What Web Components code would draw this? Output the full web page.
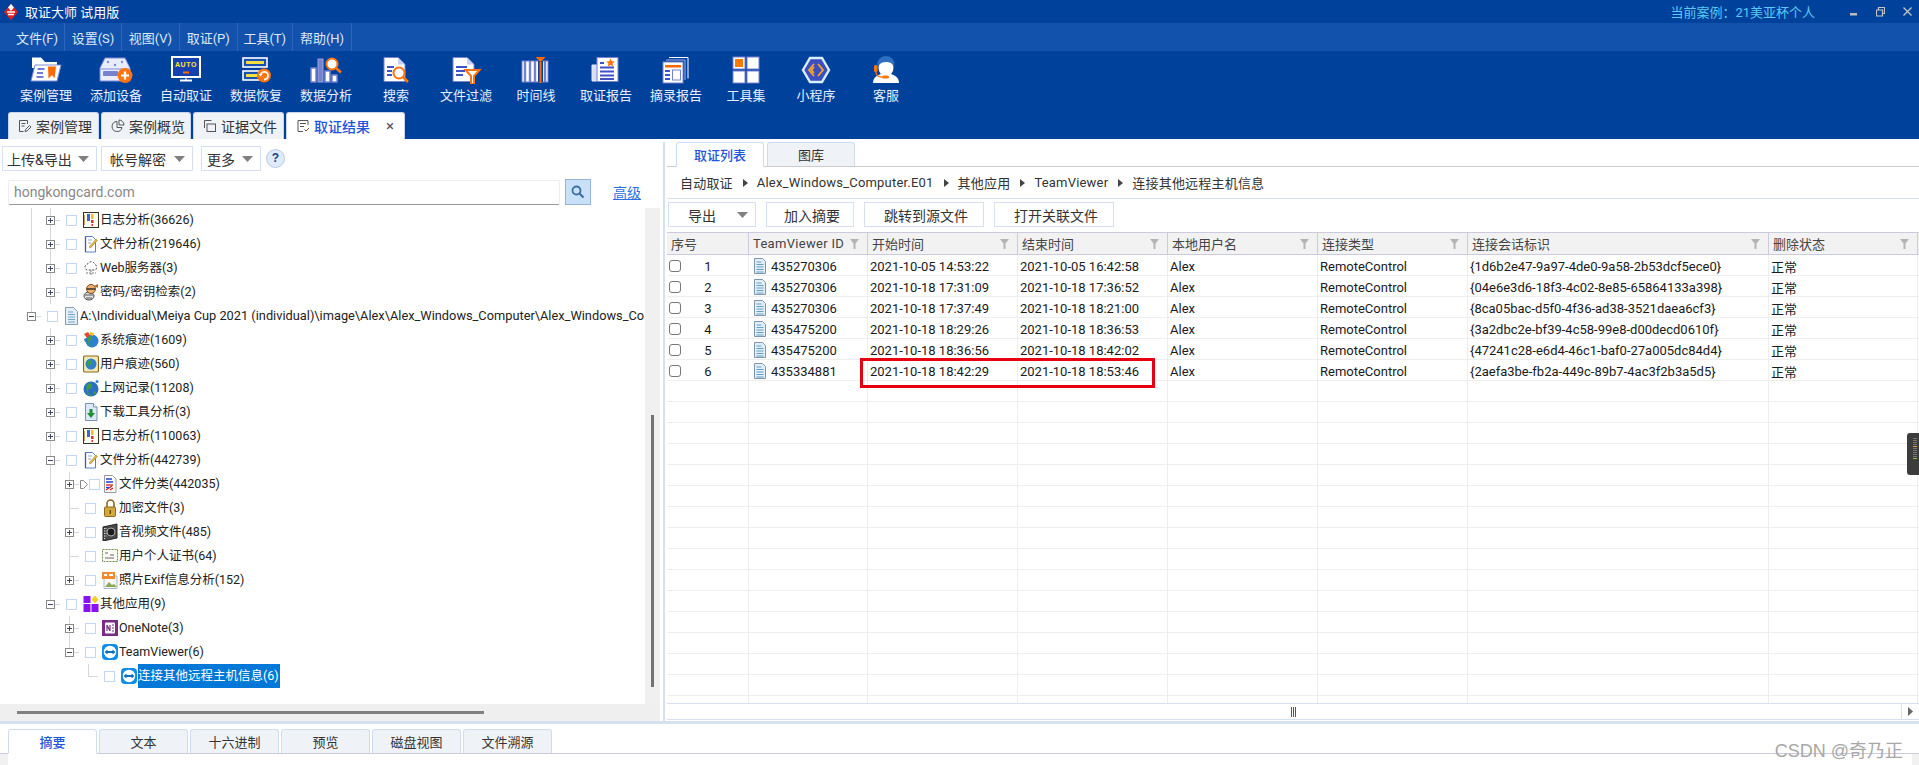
<!DOCTYPE html>
<html lang="zh">
<head>
<meta charset="utf-8">
<title>取证大师</title>
<style>
  html, body { margin: 0; height: 765px; overflow: hidden; background: #fff; }
  body { font: 13px Roboto, "Noto Sans CJK SC", sans-serif; color: #222; }
</style>
</head>
<body>

<script>
// small icons used by the tree and the tables
const PAGE = (fill, extra) => `<svg width="16" height="18" viewBox="0 0 16 18"><path d="M2.5 .5h8l3.5 3.5v13.500h-11.500z" fill="${fill}" stroke="#7d93ad"/><path d="M10.500 .5v3.500h3.500" fill="#fff" stroke="#7d93ad"/>${extra}</svg>`;
const TV = `<svg width="16" height="18" viewBox="0 0 16 18"><rect y="1" width="16" height="16" rx="4" fill="#0e8ee9"/><circle cx="8" cy="9" r="6.200" fill="#fff"/><path d="M2.500 9l3-2.500v1.500h5v-1.500l3 2.500-3 2.500v-1.500h-5v1.500z" fill="#0e6fc0"/></svg>`;
const LOG = `<svg width="16" height="18" viewBox="0 0 16 18"><rect x=".5" y="1.500" width="15" height="15" fill="#fdfdf4" stroke="#3a3320"/><rect x="4" y="3" width="3" height="7" fill="#3d63d6"/><rect x="8" y="3" width="2.500" height="5" fill="#f0c020"/><rect x="8" y="9" width="2.500" height="3" fill="#d83030"/><rect x="8.500" y="13" width="1.500" height="2" fill="#d83030"/><path d="M1.500 4v10" stroke="#c8a860"/></svg>`;
const FILEANA = `<svg width="16" height="18" viewBox="0 0 16 18"><path d="M2.500 1.500h7l3 3v12.500h-10z" fill="#fff" stroke="#5a80b8"/><path d="M5 5h4M5 8h3" stroke="#9ab"/><path d="M6 12l7-8 1.500 1.500-7 7.500z" fill="#e6b93a" stroke="#8a7030" stroke-width=".5"/><path d="M2.500 1.500v15.500" stroke="#2d62b8" stroke-width="1.300"/></svg>`;
const TREE_ICONS = {
  log: LOG,
  fileana: FILEANA,
  web: `<svg width="16" height="18" viewBox="0 0 16 18"><path d="M4 11a3 3 0 0 1 .5-5.800a4 4 0 0 1 7.500 .3a3 3 0 0 1 0 5.500z" fill="#fff" stroke="#444" stroke-dasharray="2 1.500"/><path d="M8 11v5M3 14h10" stroke="#777" stroke-dasharray="2 1"/></svg>`,
  key: `<svg width="16" height="18" viewBox="0 0 16 18"><ellipse cx="6" cy="13" rx="5" ry="4" fill="#e8e8e8" stroke="#444"/><circle cx="8" cy="6" r="4.500" fill="#f2b070" stroke="#7a4a20"/><path d="M4 6h8" stroke="#333" stroke-width="1.500"/><path d="M11 3l4-2v4z" fill="#c06020"/><path d="M2 12h8M3 15h6" stroke="#555"/></svg>`,
  doc: `<svg width="14" height="18" viewBox="0 0 14 18"><path d="M1.500 .5h8l4 4v13h-12z" fill="#e3eef8" stroke="#8a9bb0"/><path d="M4 5h5M4 7.500h7M4 10h7M4 12.500h7M4 15h7" stroke="#6fa8c8"/></svg>`,
  sys: `<svg width="16" height="18" viewBox="0 0 16 18"><circle cx="9" cy="10" r="6.500" fill="#2f7fd0"/><path d="M5 6c3-2 5 0 4 2s-3 1-3 3 2 3 3 4c-3 0-5-3-4-9z" fill="#3aa040"/><path d="M1 3l4-2 2 3-3 3z" fill="#e04a30"/><path d="M7 1l4 1-1 3-3-1z" fill="#f0c020"/><path d="M1 8l3-1 1 3-3 1z" fill="#3a70d0"/></svg>`,
  user: `<svg width="16" height="18" viewBox="0 0 16 18"><rect x=".5" y="1" width="15" height="16" rx="1.500" fill="#f3e8b8" stroke="#8a6a18" stroke-width="1.200"/><circle cx="8" cy="9" r="5.500" fill="#2f7fd0"/><path d="M5 6c3-2 5 0 4 2s-3 1-2 4c-3-1-3-4-2-6z" fill="#3aa040"/></svg>`,
  ie: `<svg width="16" height="18" viewBox="0 0 16 18"><circle cx="8" cy="10" r="7.500" fill="#2a70c0"/><path d="M4 5c4-2 6 0 5 3s-4 1-4 4 3 3 4 5c-4 0-7-6-5-12z" fill="#3f9a48"/><path d="M10 13c2-1 3 0 3 1l-2 2z" fill="#3f9a48"/><circle cx="14" cy="2.500" r="1.500" fill="#3a80e0"/></svg>`,
  down: PAGE('#dbe8f8', '<path d="M6.500 6h3v4h2.500l-4 5-4-5h2.500z" fill="#1f8f2f"/>'),
  cls: `<svg width="16" height="18" viewBox="0 0 16 18"><path d="M2.500 .5h8l3.500 3.500v13.500h-11.500z" fill="#fff" stroke="#999"/><path d="M4 4h6M4 7h7" stroke="#2040d0" stroke-width="1.300"/><path d="M4 10h7" stroke="#d02020" stroke-width="1.300"/><path d="M4 15l6-4M8 15l3-2" stroke="#d02020" stroke-width="1.300"/><path d="M4 12.500h3" stroke="#2040d0" stroke-width="1.300"/></svg>`,
  lock: `<svg width="16" height="18" viewBox="0 0 16 18"><path d="M5 8V4.500a3.500 3.500 0 0 1 7 0V8" fill="none" stroke="#8a6a20" stroke-width="1.600"/><rect x="2.500" y="8" width="11" height="9.500" rx="1" fill="#d4a840" stroke="#8a6a20"/><rect x="7.500" y="11" width="1.500" height="4" fill="#6a5010"/></svg>`,
  av: `<svg width="16" height="18" viewBox="0 0 16 18"><path d="M1 4l14-3v14l-14 3z" fill="#4a4a4a" stroke="#222"/><circle cx="9" cy="9" r="4" fill="#1c1c1c" stroke="#aaa"/><path d="M2.500 5v11M4 5v10" stroke="#ddd" stroke-dasharray="1 1.500"/></svg>`,
  cert: `<svg width="16" height="18" viewBox="0 0 16 18"><rect x=".5" y="2.500" width="15" height="12" fill="#fbfbf4" stroke="#6f8f50" stroke-dasharray="2 1"/><path d="M3 6h3M8 8h4M3 11h9" stroke="#667"/></svg>`,
  exif: `<svg width="16" height="18" viewBox="0 0 16 18"><path d="M2 5h13v12.500h-13z" fill="#f6f6f6" stroke="#a8b8c8"/><rect y="1" width="13" height="7" fill="#f08c30"/><rect x="2" y="3" width="3" height="2" fill="#fff"/><rect x="7" y="3" width="4" height="2" fill="#fff"/><path d="M3 16l4-5 3 3 2-1 3 3z" fill="#8aa850"/></svg>`,
  apps: `<svg width="16" height="18" viewBox="0 0 16 18"><rect x=".5" y="1" width="7" height="7" fill="#8a10f0"/><rect x=".5" y="9" width="7" height="8" fill="#8a10f0"/><rect x="8.500" y="9" width="7" height="8" fill="#8a10f0"/><path d="M12 .5l3.500 4-3.500 4-3.500-4z" fill="#f5d020"/></svg>`,
  one: `<svg width="16" height="18" viewBox="0 0 16 18"><rect y="1" width="16" height="16" fill="#7b2a8a"/><rect x="3" y="3.500" width="10" height="11" rx="1" fill="#fff"/><path d="M5 12V6l3 6V6" fill="none" stroke="#7b2a8a" stroke-width="1.200"/><path d="M10 6h2M10 9h2M10 12h2" stroke="#7b2a8a"/></svg>`,
  tv: TV
};
const FUNNEL = `<svg width="9" height="10" viewBox="0 0 9 10"><path d="M0 0h9L5.500 4.500V10h-2V4.500z" fill="#b4b4b4"/></svg>`;
const ARROW = `<svg width="11" height="6" viewBox="0 0 11 6"><path d="M0 0h11L5.500 6z" fill="#808080"/></svg>`;

customElements.define('title-bar', class extends HTMLElement {
  connectedCallback() {
    this.attachShadow({ mode: 'open' }).innerHTML = `
      <style>
        :host { display: flex; align-items: center; height: 23px; background: #00419c; color: #fff; padding-left: 4px; }
        .name { margin-left: 7px; }
        .case { margin-left: auto; color: #5cc9f2; margin-right: 35px; }
        svg { display: block; }
        .win { padding-right: 7px; display: flex; align-items: center; gap: 18px; }
      </style>
      <svg width="14" height="16" viewBox="0 0 14 16"><path d="M7 0l7 8-7 8-7-8z" fill="#e02020"/><path d="M7 0l3 3.500-3 3.500-3-3.500z" fill="#fff"/><path d="M3 8h8M4 10.500h6" stroke="#fff" stroke-width="1.300"/></svg>
      <span class="name">取证大师 试用版</span>
      <span class="case">当前案例：21美亚杯个人</span>
      <div class="win">
        <svg width="8" height="8" viewBox="0 0 8 8"><rect x="0" y="5" width="7" height="2.500" fill="#bcbcbc"/></svg>
        <svg width="9" height="10" viewBox="0 0 9 10"><path d="M2.500 2.500v-2h6v6h-2M.5 3h6v6h-6z" fill="none" stroke="#c4c4c4" stroke-width="1.200"/></svg>
        <svg width="9" height="9" viewBox="0 0 9 9"><path d="M.5 .5l8 8M8.500 .5l-8 8" stroke="#c4c4c4" stroke-width="1.300"/></svg>
      </div>`;
  }
});

customElements.define('menu-bar', class extends HTMLElement {
  connectedCallback() {
    this.attachShadow({ mode: 'open' }).innerHTML = `
      <style>
        :host { display: flex; height: 28px; background: #1252ac; color: #dce9fb; padding-left: 10px; }
        ::slotted(span) { display: flex; align-items: center; justify-content: center; box-sizing: border-box; border-right: 1px solid #2c66b8; }
      </style>
      <slot></slot>`;
  }
});

customElements.define('tool-bar', class extends HTMLElement {
  connectedCallback() {
    this.attachShadow({ mode: 'open' }).innerHTML = `
      <style>:host { display: flex; height: 61px; background: #00419c; padding-left: 11px; }</style>
      <slot></slot>`;
  }
});

customElements.define('tool-item', class extends HTMLElement {
  connectedCallback() {
    this.attachShadow({ mode: 'open' }).innerHTML = `
      <style>
        :host { display: flex; flex-direction: column; align-items: center; width: 70px; padding-top: 5px; color: #e6f0ff; box-sizing: border-box; }
        .ico { height: 28px; }
        ::slotted(svg) { display: block; }
        .lab { margin-top: 2px; line-height: 20px; }
      </style>
      <div class="ico"><slot></slot></div>
      <div class="lab">${this.getAttribute('label')}</div>`;
  }
});

customElements.define('main-tabs', class extends HTMLElement {
  connectedCallback() {
    this.attachShadow({ mode: 'open' }).innerHTML = `
      <style>:host { display: flex; height: 27px; background: #00419c; padding-left: 8px; gap: 2px; align-items: flex-end; }</style>
      <slot></slot>`;
  }
});

customElements.define('main-tab', class extends HTMLElement {
  connectedCallback() {
    const on = this.hasAttribute('active');
    this.attachShadow({ mode: 'open' }).innerHTML = `
      <style>
        :host { display: flex; align-items: center; box-sizing: border-box; height: 27px; border-radius: 3px 3px 0 0;
          background: ${on ? '#fff' : '#eff3f8'}; border: 1px solid #c6d6ee; border-bottom: 0; font-size: 14px;
          color: ${on ? '#2255dd' : '#333'}; padding-left: 9px; width: ${this.getAttribute('w')}px; font-weight: ${on ? 500 : 400}; }
        ::slotted(svg) { margin-right: 4px; flex: none; }
        .x { margin-left: 16px; color: #555; font-size: 15px; font-weight: 400; }
      </style>
      <slot name="icon"></slot><slot></slot>${on ? '<span class="x">×</span>' : ''}`;
  }
});

customElements.define('drop-button', class extends HTMLElement {
  connectedCallback() {
    const noArrow = this.hasAttribute('plain');
    this.attachShadow({ mode: 'open' }).innerHTML = `
      <style>
        :host { display: flex; align-items: center; box-sizing: border-box; height: 25px; border: 1px solid #d5e0f0; font-size: 14px; color: #333;
          width: ${this.getAttribute('w')}px; padding: 0 ${noArrow ? 0 : 7}px 0 ${this.getAttribute('pl') || 4}px; justify-content: ${noArrow ? 'center' : 'space-between'}; flex: none; }
        svg { display: block; }
      </style>
      <slot></slot>${noArrow ? '' : ARROW}`;
  }
});

customElements.define('search-box', class extends HTMLElement {
  connectedCallback() {
    this.attachShadow({ mode: 'open' }).innerHTML = `
      <style>
        :host { display: flex; align-items: center; height: 26px; margin-top: 8px; padding-left: 8px; }
        .inp { width: 552px; height: 25px; box-sizing: border-box; border: 1px solid #eee; border-bottom: 1px solid #999; color: #888; padding-left: 5px; font-size: 14px; line-height: 23px; border-radius: 2px; }
        .go { width: 26px; height: 26px; box-sizing: border-box; margin-left: 5px; border: 1px solid #94b4d8; background: #c8e0f8; display: flex; align-items: center; justify-content: center; }
        a { margin-left: 22px; color: #2a6ee0; text-decoration: underline; font-size: 14px; }
      </style>
      <div class="inp">hongkongcard.com</div>
      <div class="go"><svg width="14" height="14" viewBox="0 0 14 14"><circle cx="5.500" cy="5.500" r="4" fill="none" stroke="#3a6ea0" stroke-width="1.800"/><path d="M8.500 8.500l4 4" stroke="#3a6ea0" stroke-width="2.200"/></svg></div>
      <a>高级</a>`;
  }
});

customElements.define('tree-row', class extends HTMLElement {
  connectedCallback() {
    const level = +this.getAttribute('level');
    const exp = this.getAttribute('exp');
    const left = 27 + 19 * (level - 1);
    const sel = this.hasAttribute('selected');
    const marker = this.hasAttribute('marker');
    // guide lines are painted as host backgrounds
    const line = (x, y, w, h) => ({ img: 'linear-gradient(#d6d6d6,#d6d6d6)', pos: `${x}px ${y}px`, size: `${w}px ${h}px` });
    const lines = [];
    (this.getAttribute('guides') || '').split(' ').filter(Boolean).forEach(x => lines.push(line(+x, 0, 1, 24)));
    (this.getAttribute('ends') || '').split(' ').filter(Boolean).forEach(x => lines.push(line(+x, 0, 1, 12)));
    lines.push(line(left + 4, 12, 10, 1));
    this.attachShadow({ mode: 'open' }).innerHTML = `
      <style>
        :host { display: flex; align-items: center; height: 24px; flex: none; box-sizing: border-box; padding-left: ${left}px; white-space: nowrap; font-size: 12.500px; color: #222; overflow: hidden;
          background-image: ${lines.map(l => l.img).join(',')}; background-position: ${lines.map(l => l.pos).join(',')}; background-size: ${lines.map(l => l.size).join(',')}; background-repeat: no-repeat; }
        .exp { width: 9px; height: 9px; box-sizing: border-box; flex: none; background: ${exp ? '#fff' : 'none'}; ${exp ? 'border: 1px solid #8a8a8a;' : ''} position: relative; }
        .exp svg { display: block; }
        .tri { margin-left: 6px; flex: none; display: block; }
        .chk { width: 11px; height: 11px; box-sizing: border-box; border: 1px solid #c4d5f6; background: #fff; flex: none; margin-left: ${marker ? 1 : 11}px; }
        .ico { margin-left: ${marker ? 2 : 6}px; width: ${level == 1 ? 15 : 16}px; flex: none; height: 18px; margin-right: 1px; }
        .ico svg { display: block; }
        .t { line-height: 24px; ${sel ? 'background: #0078d7; color: #fff; padding-right: 1px;' : ''} }
      </style>
      <div class="exp">${exp ? `<svg width="7" height="7" viewBox="0 0 7 7"><path d="M1 3.500h5${exp == 'plus' ? 'M3.500 1v5' : ''}" stroke="#3c4a66"/></svg>` : ''}</div>
      ${marker ? '<svg class="tri" width="8" height="9" viewBox="0 0 8 9"><path d="M.5 .5h3l4 4-4 4h-3z" fill="#fff" stroke="#888"/></svg>' : ''}
      <div class="chk"></div>
      <div class="ico">${TREE_ICONS[this.getAttribute('icon')]}</div>
      <span class="t"><slot></slot></span>`;
  }
});

customElements.define('left-panel', class extends HTMLElement {
  connectedCallback() {
    this.attachShadow({ mode: 'open' }).innerHTML = `
      <style>
        :host { display: flex; flex-direction: column; width: 660px; flex: none; margin-right: 3px; }
        .tools { display: flex; align-items: center; gap: 4px; padding: 7px 0 0 2px; }
        .help { width: 19px; height: 19px; box-sizing: border-box; border-radius: 50%; border: 1px solid #b9cbe0; background: #dfeafa; color: #1f3f86; font: bold 12px/17px "Liberation Sans", sans-serif; text-align: center; margin-left: 1px; }
        .body { display: flex; height: 497px; margin-top: 3px; }
        .tree { width: 645px; overflow: hidden; display: flex; flex-direction: column; }
        .vs { width: 15px; background: #f0f0f0; flex: none; box-sizing: border-box; padding: 207px 0 0 6px; }
        .vs div { width: 3px; height: 272px; background: #737373; }
        .hs { height: 17px; background: #efefef; padding: 7px 0 0 17px; box-sizing: border-box; }
        .hs div { width: 467px; height: 3px; background: #808080; }
      </style>
      <div class="tools">
        <drop-button w="95" pl="4">上传&amp;导出</drop-button>
        <drop-button w="92" pl="8">帐号解密</drop-button>
        <drop-button w="60" pl="5" style="margin-left:4px">更多</drop-button>
        <div class="help">?</div>
      </div>
      <search-box></search-box>
      <div class="body">
        <div class="tree"><slot></slot></div>
        <div class="vs"><div></div></div>
      </div>
      <div class="hs"><div></div></div>`;
  }
});

customElements.define('sub-tab', class extends HTMLElement {
  connectedCallback() {
    const on = this.hasAttribute('active');
    this.attachShadow({ mode: 'open' }).innerHTML = `
      <style>
        :host { display: flex; align-items: center; justify-content: center; box-sizing: border-box; border: 1px solid #cfdcf0; border-radius: 3px 3px 0 0;
          border-bottom: ${on ? '1px solid #fff' : '0'}; background: ${on ? '#fff' : '#eff3f8'}; color: ${on ? '#2255dd' : '#333'}; font-weight: ${on ? 500 : 400};
          width: ${this.getAttribute('w') || 89}px; height: ${on ? 25 : 24}px; margin-bottom: ${on ? -1 : 0}px; }
      </style>
      <slot></slot>`;
  }
});

customElements.define('path-bar', class extends HTMLElement {
  connectedCallback() {
    const parts = this.getAttribute('parts').split('|');
    this.attachShadow({ mode: 'open' }).innerHTML = `
      <style>
        :host { display: flex; align-items: center; height: 32px; box-sizing: border-box; border-bottom: 1px solid #d5e0f0; padding-left: 13px; color: #333; gap: 8px; letter-spacing: .2px; }
        svg { display: block; margin-left: 2px; margin-right: 1px; }
      </style>
      ${parts.map(p => `<span>${p}</span>`).join('<svg width="5" height="8" viewBox="0 0 5 8"><path d="M0 0l5 4-5 4z" fill="#444"/></svg>')}`;
  }
});

const COLS = [82, 119, 150, 150, 150, 150, 301, 149];
const HEAD = ['序号', 'TeamViewer ID', '开始时间', '结束时间', '本地用户名', '连接类型', '连接会话标识', '删除状态'];
const ROWS = [
  ['435270306', '2021-10-05 14:53:22', '2021-10-05 16:42:58', '{1d6b2e47-9a97-4de0-9a58-2b53dcf5ece0}'],
  ['435270306', '2021-10-18 17:31:09', '2021-10-18 17:36:52', '{04e6e3d6-18f3-4c02-8e85-65864133a398}'],
  ['435270306', '2021-10-18 17:37:49', '2021-10-18 18:21:00', '{8ca05bac-d5f0-4f36-ad38-3521daea6cf3}'],
  ['435475200', '2021-10-18 18:29:26', '2021-10-18 18:36:53', '{3a2dbc2e-bf39-4c58-99e8-d00decd0610f}'],
  ['435475200', '2021-10-18 18:36:56', '2021-10-18 18:42:02', '{47241c28-e6d4-46c1-baf0-27a005dc84d4}'],
  ['435334881', '2021-10-18 18:42:29', '2021-10-18 18:53:46', '{2aefa3be-fb2a-449c-89b7-4ac3f2b3a5d5}']
];
const DOC = `<svg width="12" height="16" viewBox="0 0 12 16"><path d="M.5 .5h8l3 3v12h-11z" fill="#e3eef8" stroke="#7f95ad"/><path d="M2.500 4h5M2.500 6.500h7M2.500 9h7M2.500 11.500h7M2.500 14h7" stroke="#62a0c4"/></svg>`;

customElements.define('data-table', class extends HTMLElement {
  connectedCallback() {
    const tpl = COLS.map(c => c + 'px').join(' ');
    let rows = '';
    for (let i = 0; i < 22; i++) {
      const r = ROWS[i];
      const cells = r ? [
        `<span class="box"></span><span class="no">${i + 1}</span>`,
        `${DOC}<span class="id">${r[0]}</span>`, r[1], r[2], 'Alex', 'RemoteControl', r[3], '正常'
      ] : ['', '', '', '', '', '', '', ''];
      rows += `<div class="row">${cells.map(c => `<div class="c">${c}</div>`).join('')}</div>`;
    }
    this.attachShadow({ mode: 'open' }).innerHTML = `
      <style>
        :host { display: block; position: relative; margin-top: 5px; }
        .head, .row { display: grid; grid-template-columns: ${tpl}; }
        .head { height: 23px; box-sizing: border-box; background: #f2f2f2; border-top: 1px solid #cbcbdd; border-bottom: 1px solid #cbcbdd; color: #444; }
        .h { display: flex; align-items: center; justify-content: space-between; padding: 0 4px; border-right: 1px solid #cbcbdd; box-sizing: border-box; white-space: nowrap; overflow: hidden; }
        .h svg { margin-right: 4px; flex: none; }
        .h:nth-child(2) span { letter-spacing: .3px; }
        .body { height: 448px; overflow: hidden; }
        .row { height: 21px; box-sizing: border-box; border-bottom: 1px solid #eeeeee; }
        .c { display: flex; align-items: center; padding: 2px 0 0 2px; border-right: 1px solid #eeeeee; white-space: nowrap; overflow: hidden; color: #1a1a1a; min-width: 0; box-sizing: border-box; }
        .c:nth-child(2) { padding-left: 5px; }
        .box { width: 12px; height: 12px; box-sizing: border-box; border: 1px solid #777; border-radius: 3px; background: #fff; flex: none; }
        .no { margin-left: 22px; width: 10px; text-align: center; }
        .id { margin-left: 5px; }
        .mark { position: absolute; left: 193px; top: 126px; width: 295px; height: 30px; box-sizing: border-box; border: 3px solid #e60012; }
      </style>
      <div class="head">${HEAD.map((h, i) => `<div class="h"><span>${h}</span>${i ? FUNNEL : ''}</div>`).join('')}</div>
      <div class="body">${rows}</div>
      <div class="mark"></div>`;
  }
});

customElements.define('right-panel', class extends HTMLElement {
  connectedCallback() {
    this.attachShadow({ mode: 'open' }).innerHTML = `
      <style>
        :host { display: flex; flex-direction: column; flex: 1; min-width: 0; margin-left: 2px; position: relative; }
        .tabs { display: flex; gap: 3px; align-items: flex-end; height: 28px; box-sizing: border-box; padding-left: 9px; border-bottom: 1px solid #ccc; }
        .btns { display: flex; gap: 10px; padding: 3px 0 0 1px; }
        .hs { display: flex; height: 17px; box-sizing: border-box; border-top: 1px solid #d5e0f0; border-bottom: 1px solid #d5e0f0; }
        .grip { flex: 1; display: flex; justify-content: center; align-items: center; gap: 1px; padding-left: 18px; }
        .grip i { width: 1px; height: 10px; background: #2a5aa8; display: block; }
        .end { width: 17px; border-left: 1px solid #d5e0f0; display: flex; align-items: center; justify-content: center; }
        .meter { position: absolute; right: 0; top: 294px; width: 12px; height: 42px; box-sizing: border-box; background: #3c3c3c; border-radius: 3px 0 0 3px; padding: 5px 2px 0 6px; display: flex; flex-direction: column; gap: 1px; }
        .meter i { display: block; height: 1px; background: #777; }
        .meter i.o { background: #e8a030; }
        .meter i.g { background: #8ac040; }
      </style>
      <div class="tabs"><sub-tab active w="88">取证列表</sub-tab><sub-tab w="88">图库</sub-tab></div>
      <path-bar parts="自动取证|Alex_Windows_Computer.E01|其他应用|TeamViewer|连接其他远程主机信息"></path-bar>
      <div class="btns">
        <drop-button w="88" pl="19">导出</drop-button>
        <drop-button w="88" plain>加入摘要</drop-button>
        <drop-button w="120" plain>跳转到源文件</drop-button>
        <drop-button w="120" plain>打开关联文件</drop-button>
      </div>
      <data-table></data-table>
      <div class="hs">
        <div class="grip"><i></i><i></i><i></i></div>
        <div class="end"><svg width="5" height="9" viewBox="0 0 5 9"><path d="M0 0l5 4.500-5 4.500z" fill="#666"/></svg></div>
      </div>
      <div class="meter"><i></i><i></i><i></i><i></i><i class="o"></i><i></i><i></i><i></i><i></i><i></i><i class="g"></i></div>`;
  }
});

customElements.define('work-area', class extends HTMLElement {
  connectedCallback() {
    this.attachShadow({ mode: 'open' }).innerHTML = `
      <style>
        :host { display: flex; height: 582px; background: #fff; overflow: hidden; }
        .split { width: 2px; margin-top: 3px; background: #d5e0f0; flex: none; }
      </style>
      <slot name="left"></slot>
      <div class="split"></div>
      <slot name="right"></slot>`;
  }
});

customElements.define('bottom-tabs', class extends HTMLElement {
  connectedCallback() {
    this.attachShadow({ mode: 'open' }).innerHTML = `
      <style>
        :host { display: block; position: relative; height: 44px; border-top: 3px solid #d5e0f0; box-sizing: border-box; background: #fff; }
        .tabs { display: flex; gap: 2px; height: 30px; box-sizing: border-box; padding: 5px 0 0 8px; border-bottom: 1px solid #cbcbdd; }
        .foot { display: flex; height: 11px; }
        .foot i { display: block; background: #f1f1f1; }
        .wm { position: absolute; right: 16px; top: 12px; font: 18px "Liberation Sans", "Noto Sans CJK SC", sans-serif; color: #a8a8a8; white-space: nowrap; }
      </style>
      <div class="tabs"><slot></slot></div>
      <div class="foot"><i style="width:8px"></i><span style="flex:1"></span><i style="width:7px"></i></div>
      <div class="wm">CSDN @奇乃正</div>`;
  }
});
</script>

<title-bar></title-bar>
<menu-bar><span style="width:55px">文件(F)</span><span style="width:57px">设置(S)</span><span style="width:58px">视图(V)</span><span style="width:57.500px">取证(P)</span><span style="width:55.500px">工具(T)</span><span style="width:59px">帮助(H)</span></menu-bar>

<tool-bar>
  <tool-item label="案例管理"><svg width="36" height="28" viewBox="0 0 36 28"><path d="M4 1.500h9l4 4.500h12v6H4z" fill="#fff"/><path d="M7 9h26l-4 16H3z" fill="#fff" stroke="#7c8bd6"/><path d="M9.500 13h7M9 17h6M8.500 21h7" stroke="#3f51c8" stroke-width="1.700"/><path d="M20 10.500h8l-1.500 12-2.500-3.500-3.500 3.500z" fill="#ff6a00"/></svg></tool-item>
  <tool-item label="添加设备"><svg width="36" height="28" viewBox="0 0 36 28"><path d="M7 2h20l5 10v13H2V12z" fill="#e9edff" stroke="#7c8bd6"/><path d="M3 13h28" stroke="#7c8bd6"/><circle cx="10" cy="6" r="1.200" fill="#7c8bd6"/><circle cx="17" cy="9" r="1.200" fill="#7c8bd6"/><circle cx="24" cy="6" r="1.200" fill="#7c8bd6"/><rect x="5" y="15" width="15" height="5" rx="1" fill="#7482d0"/><circle cx="27" cy="19.500" r="7.500" fill="#ff7410"/><path d="M23 19.500h8M27 15.500v8" stroke="#fff" stroke-width="2.200"/></svg></tool-item>
  <tool-item label="自动取证"><svg width="36" height="28" viewBox="0 0 36 28"><rect x="4" y="1" width="28" height="20" fill="#1440b0" stroke="#fff" stroke-width="2"/><text x="18" y="11" text-anchor="middle" font-family="Liberation Sans" font-size="7" font-weight="700" letter-spacing=".6" fill="#ffe830">AUTO</text><rect x="15" y="15.500" width="6" height="2" fill="#ff6a00"/><path d="M12 24.500h12" stroke="#fff" stroke-width="2"/><path d="M18 21v3" stroke="#fff"/></svg></tool-item>
  <tool-item label="数据恢复"><svg width="36" height="28" viewBox="0 0 36 28"><rect x="5" y="2" width="24" height="9" fill="#1a50b0" stroke="#fff" stroke-width="1.600"/><rect x="8" y="5" width="18" height="3" fill="#f4e040"/><rect x="5" y="15" width="24" height="9" fill="#1a50b0" stroke="#fff" stroke-width="1.600"/><rect x="8" y="18" width="12" height="3" fill="#f4e040"/><circle cx="26" cy="19.500" r="7" fill="#ff7410"/><path d="M22.500 19a3.800 3.800 0 1 1 3.500 4.500" fill="none" stroke="#fff" stroke-width="1.800"/><path d="M20.500 18h4l-2 2.500z" fill="#fff"/></svg></tool-item>
  <tool-item label="数据分析"><svg width="36" height="28" viewBox="0 0 36 28"><rect x="3" y="12" width="5" height="14" fill="#fff" stroke="#7482d0" stroke-width="1.500"/><rect x="10" y="3" width="5" height="23" fill="#7482d0" stroke="#9aa6e4"/><rect x="17" y="15" width="5" height="11" fill="#fff" stroke="#7482d0" stroke-width="1.500"/><rect x="24" y="19" width="5" height="7" fill="#fff" stroke="#7482d0" stroke-width="1.500"/><circle cx="24" cy="8" r="5.500" fill="#fff" stroke="#ff7410" stroke-width="2"/><path d="M28 12l5 4.500" stroke="#ff7410" stroke-width="2.500"/></svg></tool-item>
  <tool-item label="搜索"><svg width="36" height="28" viewBox="0 0 36 28"><path d="M6 1.500h14l7 7v17H6z" fill="#fff" stroke="#7482d0"/><path d="M20 1.500l7 7h-7z" fill="#c8cff0"/><path d="M9 11h7M9 15h5M9 19h5" stroke="#3f51c8" stroke-width="1.800"/><circle cx="21" cy="17" r="5.500" fill="#fff" stroke="#ff7410" stroke-width="2"/><path d="M25 21l5 5" stroke="#ff7410" stroke-width="2.500"/></svg></tool-item>
  <tool-item label="文件过滤"><svg width="36" height="28" viewBox="0 0 36 28"><path d="M5 1.500h14l7 7v17H5z" fill="#fff" stroke="#7482d0"/><path d="M19 1.500l7 7h-7z" fill="#c8cff0"/><path d="M8 11h11M8 15h9M8 19h7" stroke="#3f51c8" stroke-width="1.800"/><path d="M17.500 14h14l-5.500 6v8h-3v-8z" fill="#fff" stroke="#ff7410" stroke-width="2"/></svg></tool-item>
  <tool-item label="时间线"><svg width="36" height="28" viewBox="0 0 36 28"><rect x="4" y="5" width="26" height="21" fill="#fff" stroke="#7482d0"/><path d="M7 5v21M12 5v21M17 5v21M27 5v21" stroke="#7482d0" stroke-width="2.400"/><path d="M22.500 5v21" stroke="#00419c" stroke-width="5"/><path d="M22.500 6v21" stroke="#ff6a00" stroke-width="2"/><path d="M17.500 1h10l-5 5z" fill="#ff6a00"/></svg></tool-item>
  <tool-item label="取证报告"><svg width="36" height="28" viewBox="0 0 36 28"><path d="M4 9h6v16H4z" fill="#d9def5" stroke="#e9ecff"/><rect x="9" y="1.500" width="21" height="24" fill="#fff" stroke="#7482d0"/><path d="M12 7h4M12 11.500h14M12 15.500h14M12 19.500h14M12 23h14" stroke="#3f51c8" stroke-width="1.800"/><path d="M22.500 2.500l1.300 2.800 3 .3-2.300 2 .7 3-2.700-1.600-2.700 1.600.7-3-2.300-2 3-.3z" fill="#ff7410"/></svg></tool-item>
  <tool-item label="摘录报告"><svg width="36" height="28" viewBox="0 0 36 28"><path d="M11 1.500h19v21" fill="none" stroke="#fff"/><path d="M8 4h19v20" fill="none" stroke="#aab4ea"/><rect x="5" y="6" width="20" height="21" fill="#fff" stroke="#7482d0"/><rect x="7" y="9" width="16" height="2.500" fill="#ff6a00"/><path d="M7 15h5M7 19h5M7 23h5" stroke="#3f51c8" stroke-width="1.800"/><rect x="14.500" y="14" width="8" height="10" fill="#fff" stroke="#7482d0"/></svg></tool-item>
  <tool-item label="工具集"><svg width="36" height="28" viewBox="0 0 36 28"><rect x="5" y="1" width="12" height="12" fill="#fff" stroke="#7482d0"/><rect x="7" y="3" width="8" height="8" fill="#ff7a00"/><rect x="19" y="1" width="12" height="12" fill="#fff" stroke="#7482d0"/><rect x="5" y="15" width="12" height="12" fill="#fff" stroke="#7482d0"/><rect x="19" y="15" width="12" height="12" fill="#fff" stroke="#7482d0"/></svg></tool-item>
  <tool-item label="小程序"><svg width="36" height="28" viewBox="0 0 36 28"><path d="M12 2h12l7 12-7 12H12L5 14z" fill="#3c4ec0" stroke="#d8f0fc" stroke-width="2.400"/><path d="M16 8l-5 6 5 6M20 8l5 6-5 6M16 11l-2.500 3 2.500 3" fill="none" stroke="#f5a623" stroke-width="1.800"/></svg></tool-item>
  <tool-item label="客服"><svg width="36" height="28" viewBox="0 0 36 28"><path d="M5 27c0-6 5-8 8-9h10c3 1 8 3 8 9z" fill="#fff"/><ellipse cx="18" cy="12" rx="7.500" ry="8" fill="#fff"/><path d="M9.500 12C8 4 13 0 18 0s10 4 8 12c-1-4-3-6-8-6s-8 3-8.500 6z" fill="#2d6fc0"/><rect x="6" y="9" width="3.500" height="7" rx="1.500" fill="#ff7410"/><path d="M8 16c0 4 3 5 6 5" fill="none" stroke="#ff7410" stroke-width="1.300"/><rect x="14" y="19.500" width="7" height="3" rx="1.500" fill="#ff7410"/></svg></tool-item>
</tool-bar>

<main-tabs>
  <main-tab w="91"><svg slot="icon" width="14" height="14" viewBox="0 0 14 14"><path d="M9.500 5V1.500h-8v11h4M3.500 4.500h4M3.500 7h3" fill="none" stroke="#555"/><path d="M7 12.500l.5-2 4-4 1.500 1.500-4 4z" fill="none" stroke="#555"/></svg>案例管理</main-tab>
  <main-tab w="90"><svg slot="icon" width="14" height="14" viewBox="0 0 14 14"><path d="M6 2.500a5 5 0 1 0 5 6h-5z" fill="none" stroke="#555"/><path d="M8 1v5h5a5 5 0 0 0-5-5z" fill="none" stroke="#555"/></svg>案例概览</main-tab>
  <main-tab w="91"><svg slot="icon" width="14" height="14" viewBox="0 0 14 14"><path d="M1.500 9V1.500h7" fill="none" stroke="#555"/><rect x="4" y="5" width="8.500" height="7.500" fill="none" stroke="#555"/></svg>证据文件</main-tab>
  <main-tab w="119" active><svg slot="icon" width="14" height="14" viewBox="0 0 14 14"><path d="M12 6V1.500H2v11h5M4 4.500h6M4 7.500h4M8.500 10.500l1.500 1.500 3-3" fill="none" stroke="#555"/></svg>取证结果</main-tab>
</main-tabs>

<work-area>
  <left-panel slot="left">
    <tree-row level="2" exp="plus" icon="log" guides="31 50">日志分析(36626)</tree-row>
    <tree-row level="2" exp="plus" icon="fileana" guides="31 50">文件分析(219646)</tree-row>
    <tree-row level="2" exp="plus" icon="web" guides="31 50">Web服务器(3)</tree-row>
    <tree-row level="2" exp="plus" icon="key" guides="31 50">密码/密钥检索(2)</tree-row>
    <tree-row level="1" exp="minus" icon="doc" ends="31" style="font-size:12.800px">A:\Individual\Meiya Cup 2021 (individual)\image\Alex\Alex_Windows_Computer\Alex_Windows_Co</tree-row>
    <tree-row level="2" exp="plus" icon="sys" guides="50">系统痕迹(1609)</tree-row>
    <tree-row level="2" exp="plus" icon="user" guides="50">用户痕迹(560)</tree-row>
    <tree-row level="2" exp="plus" icon="ie" guides="50">上网记录(11208)</tree-row>
    <tree-row level="2" exp="plus" icon="down" guides="50">下载工具分析(3)</tree-row>
    <tree-row level="2" exp="plus" icon="log" guides="50">日志分析(110063)</tree-row>
    <tree-row level="2" exp="minus" icon="fileana" guides="50">文件分析(442739)</tree-row>
    <tree-row level="3" exp="plus" icon="cls" guides="50 69" marker>文件分类(442035)</tree-row>
    <tree-row level="3" icon="lock" guides="50 69">加密文件(3)</tree-row>
    <tree-row level="3" exp="plus" icon="av" guides="50 69">音视频文件(485)</tree-row>
    <tree-row level="3" icon="cert" guides="50 69">用户个人证书(64)</tree-row>
    <tree-row level="3" exp="plus" icon="exif" guides="50" ends="69">照片Exif信息分析(152)</tree-row>
    <tree-row level="2" exp="minus" icon="apps" ends="50">其他应用(9)</tree-row>
    <tree-row level="3" exp="plus" icon="one" guides="69">OneNote(3)</tree-row>
    <tree-row level="3" exp="minus" icon="tv" ends="69">TeamViewer(6)</tree-row>
    <tree-row level="4" icon="tv" ends="88" selected>连接其他远程主机信息(6)</tree-row>
  </left-panel>
  <right-panel slot="right"></right-panel>
</work-area>

<bottom-tabs>
  <sub-tab active w="89">摘要</sub-tab><sub-tab w="89">文本</sub-tab><sub-tab w="89">十六进制</sub-tab><sub-tab w="89">预览</sub-tab><sub-tab w="89">磁盘视图</sub-tab><sub-tab w="89">文件溯源</sub-tab>
</bottom-tabs>

</body>
</html>
